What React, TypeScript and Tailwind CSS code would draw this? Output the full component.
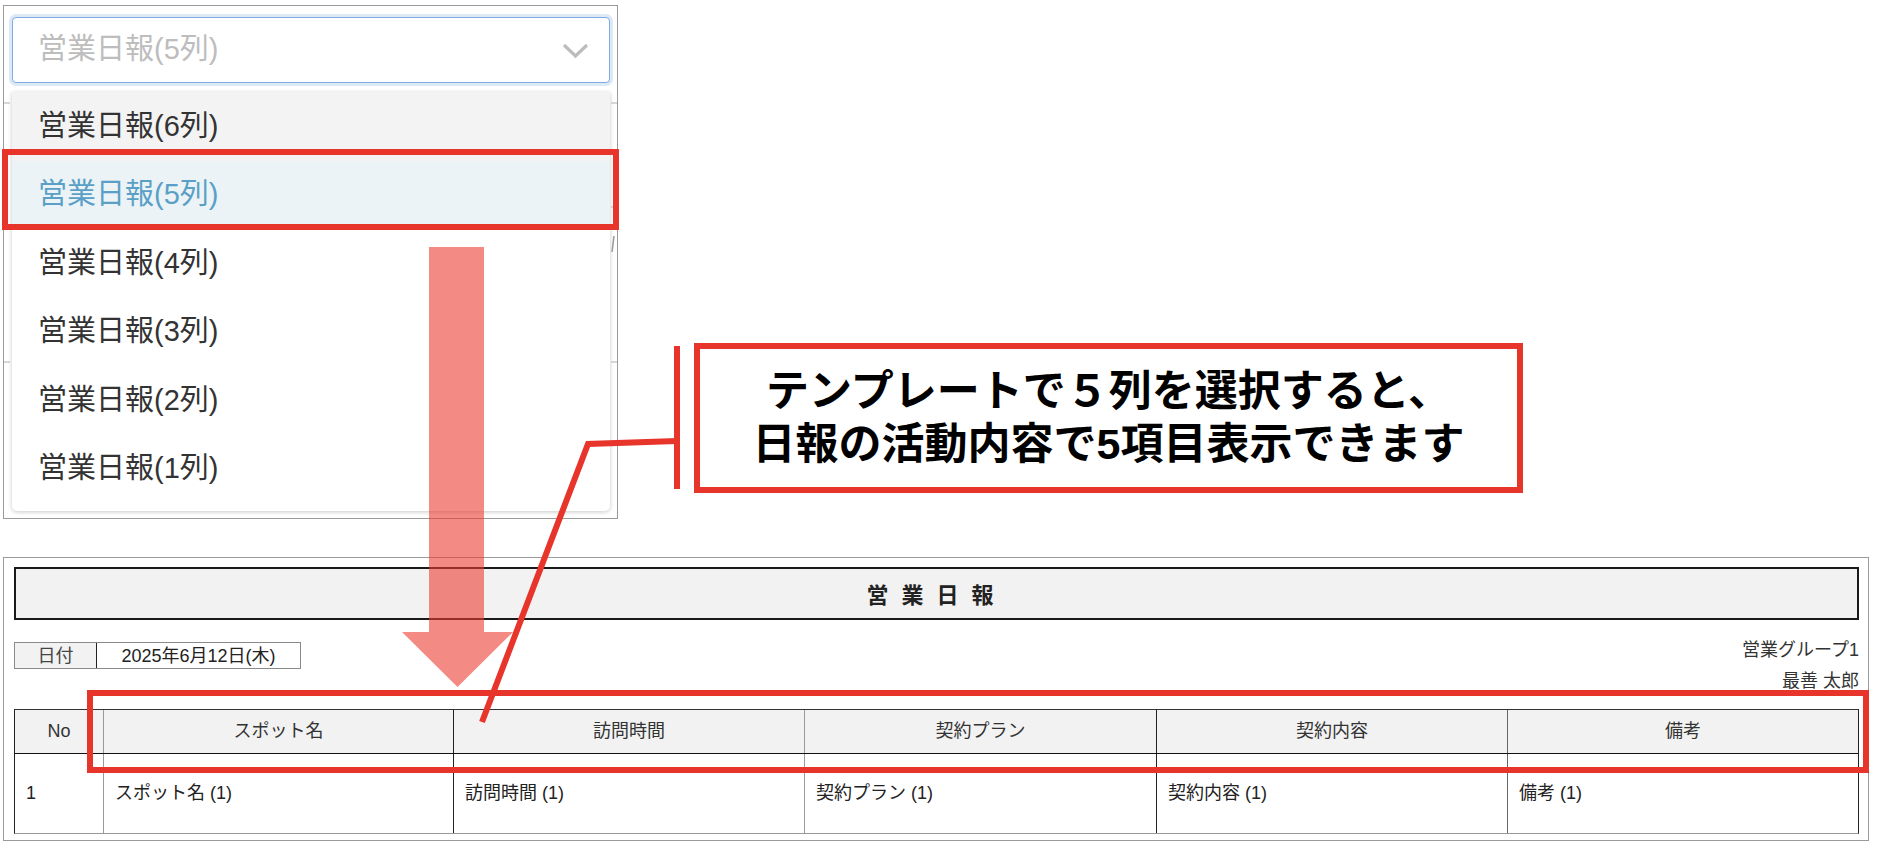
import React from "react";

const items = [
  { label: "営業日報(6列)", cls: "bg-[#f3f3f3] text-[#333333]" },
  { label: "営業日報(5列)", cls: "bg-[#ebf3f7] text-[#5aa0c6]" },
  { label: "営業日報(4列)", cls: "bg-white text-[#333333]" },
  { label: "営業日報(3列)", cls: "bg-white text-[#333333]" },
  { label: "営業日報(2列)", cls: "bg-white text-[#333333]" },
  { label: "営業日報(1列)", cls: "bg-white text-[#333333]" },
];

const headers = [
  { t: "No", b: "" },
  { t: "スポット名", b: "border-l border-l-[#9a9a9a]" },
  { t: "訪問時間", b: "border-l border-l-[#222222]" },
  { t: "契約プラン", b: "border-l border-l-[#9a9a9a]" },
  { t: "契約内容", b: "border-l border-l-[#222222]" },
  { t: "備考", b: "border-l border-l-[#666666]" },
];

const cells = ["1", "スポット名 (1)", "訪問時間 (1)", "契約プラン (1)", "契約内容 (1)", "備考 (1)"];

export default function App() {
  return (
    <div className="relative w-[1880px] h-[848px] overflow-hidden bg-white font-['Liberation_Sans','Noto_Sans_CJK_JP',sans-serif]">
      {/* top row */}
      <div className="flex items-start">
        {/* dropdown panel */}
        <div className="relative mt-[5px] ml-[3px] w-[615px] h-[514px] shrink-0 border border-[#9a9a9a] bg-white pl-[8px] pt-[11px]">
          <div className="relative flex items-center h-[66px] w-[598px] rounded-[4px] border-[1.5px] border-[#7eabe4] shadow-[0_0_0_3px_#dde9f5] bg-white pl-[25px] text-[29px] text-[#bdbdbd]">
            営業日報(5列)
            <svg className="absolute right-[20px] top-[25px]" width="27" height="16" viewBox="0 0 27 16">
              <polyline points="2,2 13.5,13 25,2" fill="none" stroke="#bdbdbd" strokeWidth="3.2" />
            </svg>
          </div>
          <div className="mt-[9px] w-[598px] rounded-b-[5px] bg-white shadow-[0_1px_4px_rgba(0,0,0,0.22)] pb-[8px] overflow-hidden">
            {items.map((it) => (
              <div key={it.label} className={`flex items-center h-[68.5px] pl-[26px] text-[29px] ${it.cls}`}>
                {it.label}
              </div>
            ))}
          </div>
        </div>

        {/* callout */}
        <div className="ml-[76px] mt-[343px] w-[829px] h-[150px] shrink-0 border-[6px] border-[#e8352b] bg-white flex flex-col items-center justify-center font-['Liberation_Sans','Noto_Sans_CJK_JP',sans-serif] font-bold text-[43px] leading-[53px] text-black">
          <div>テンプレートで５列を選択すると、</div>
          <div>日報の活動内容で5項目表示できます</div>
        </div>
      </div>

      {/* report panel */}
      <div className="mt-[38px] ml-[3px] w-[1866px] h-[284px] border border-[#9a9a9a] bg-white pl-[10px] pr-[9px] pt-[9px] text-[18px]">
        <div className="flex items-center justify-center h-[53px] border-2 border-[#1a1a1a] bg-[#f2f2f2]">
          <span className="text-[22px] font-bold tracking-[13px] text-[#222222] font-['Noto_Sans_CJK_JP',sans-serif]">営業日報</span>
        </div>

        <div className="mt-[22px] h-[67px] flex justify-between items-start">
          <div className="flex h-[27px] border border-[#8a8a8a] leading-none">
            <div className="w-[82px] flex items-center justify-center bg-[#f2f2f2] border-r border-r-[#222222] text-[#444444]">日付</div>
            <div className="w-[203px] flex items-center justify-center text-[#222222]">2025年6月12日(木)</div>
          </div>
          <div className="-mt-[7px] flex flex-col items-end leading-[31px] text-[#333333]">
            <div>営業グループ1</div>
            <div>最善 太郎</div>
          </div>
        </div>

        <div className="border-t-[1.5px] border-t-[#333333] border-l border-l-[#222222] border-r border-r-[#222222] border-b border-b-[#999999]">
          <div className="grid grid-cols-[88px_350px_351px_352px_351px_1fr] h-[44px] bg-[#f2f2f2] border-b border-b-[#111111]">
            {headers.map((h) => (
              <div key={h.t} className={`flex items-center justify-center text-[#333333] ${h.b}`}>
                {h.t}
              </div>
            ))}
          </div>
          <div className="grid grid-cols-[88px_350px_351px_352px_351px_1fr] h-[79px]">
            {cells.map((c, i) => (
              <div key={c} className={`flex items-center pl-[11px] text-[#222222] ${headers[i].b}`}>
                {c}
              </div>
            ))}
          </div>
        </div>
      </div>

      {/* annotation overlay */}
      <svg className="absolute left-0 top-0 pointer-events-none" width="1880" height="848" viewBox="0 0 1880 848">
        <g stroke="#c8c8c8" strokeWidth="1.5">
          <line x1="4" y1="103" x2="10" y2="103" />
          <line x1="4" y1="362" x2="10" y2="362" />
          <line x1="611" y1="103" x2="617" y2="103" />
          <line x1="611" y1="207" x2="617" y2="207" />
          <line x1="611" y1="362" x2="617" y2="362" />
          <line x1="614" y1="236" x2="612" y2="252" stroke="#9a9a9a" />
        </g>
        <polygon
          points="429,247 484,247 484,632 513,632 457.5,687 402,632 429,632"
          fill="#eb3c32"
          fillOpacity="0.6"
        />
        <rect x="5" y="152" width="611" height="75" fill="none" stroke="#e8352b" strokeWidth="6" />
        <rect x="90" y="693" width="1776" height="77" fill="none" stroke="#e8352b" strokeWidth="6" />
        <line x1="677" y1="346" x2="677" y2="489" stroke="#e8352b" strokeWidth="6" />
        <polyline points="482,722 588,444 677,441" fill="none" stroke="#e8352b" strokeWidth="6" strokeLinejoin="miter" />
      </svg>
    </div>
  );
}
